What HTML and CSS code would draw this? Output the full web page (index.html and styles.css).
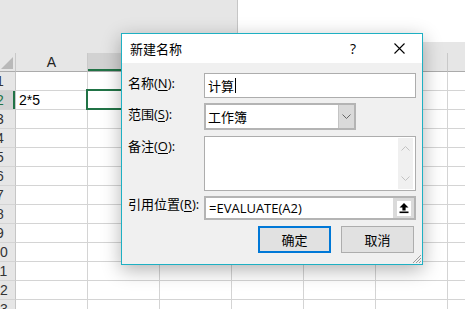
FILE: index.html
```html
<!DOCTYPE html>
<html lang="zh-CN">
<head>
  <meta charset="UTF-8" />
  <title>新建名称</title>
  <link rel="stylesheet" href="styles.css">
</head>
<body>
<div class="app">

  <!-- area above the grid -->
  <div class="topbar">
    <div class="namebox"></div>
    <div class="top-right"></div>
  </div>

  <!-- worksheet (headers B-G sit under the dialog) -->
  <div class="sheet">
    <div class="row head">
      <div class="rh corner"><span class="tri"></span></div>
      <div class="cell ch">A</div>
      <div class="cell ch sel"></div>
      <div class="cell ch"></div>
      <div class="cell ch"></div>
      <div class="cell ch"></div>
      <div class="cell ch"></div>
      <div class="cell ch"></div>
    </div>
    <div class="row"><div class="rh">1</div><div class="cell"></div><div class="cell"></div><div class="cell"></div><div class="cell"></div><div class="cell"></div><div class="cell"></div><div class="cell"></div></div>
    <div class="row"><div class="rh sel">2</div><div class="cell">2*5</div><div class="cell"></div><div class="cell"></div><div class="cell"></div><div class="cell"></div><div class="cell"></div><div class="cell"></div></div>
    <div class="row"><div class="rh">3</div><div class="cell"></div><div class="cell"></div><div class="cell"></div><div class="cell"></div><div class="cell"></div><div class="cell"></div><div class="cell"></div></div>
    <div class="row"><div class="rh">4</div><div class="cell"></div><div class="cell"></div><div class="cell"></div><div class="cell"></div><div class="cell"></div><div class="cell"></div><div class="cell"></div></div>
    <div class="row"><div class="rh">5</div><div class="cell"></div><div class="cell"></div><div class="cell"></div><div class="cell"></div><div class="cell"></div><div class="cell"></div><div class="cell"></div></div>
    <div class="row"><div class="rh">6</div><div class="cell"></div><div class="cell"></div><div class="cell"></div><div class="cell"></div><div class="cell"></div><div class="cell"></div><div class="cell"></div></div>
    <div class="row"><div class="rh">7</div><div class="cell"></div><div class="cell"></div><div class="cell"></div><div class="cell"></div><div class="cell"></div><div class="cell"></div><div class="cell"></div></div>
    <div class="row"><div class="rh">8</div><div class="cell"></div><div class="cell"></div><div class="cell"></div><div class="cell"></div><div class="cell"></div><div class="cell"></div><div class="cell"></div></div>
    <div class="row"><div class="rh">9</div><div class="cell"></div><div class="cell"></div><div class="cell"></div><div class="cell"></div><div class="cell"></div><div class="cell"></div><div class="cell"></div></div>
    <div class="row"><div class="rh">10</div><div class="cell"></div><div class="cell"></div><div class="cell"></div><div class="cell"></div><div class="cell"></div><div class="cell"></div><div class="cell"></div></div>
    <div class="row"><div class="rh">11</div><div class="cell"></div><div class="cell"></div><div class="cell"></div><div class="cell"></div><div class="cell"></div><div class="cell"></div><div class="cell"></div></div>
    <div class="row"><div class="rh">12</div><div class="cell"></div><div class="cell"></div><div class="cell"></div><div class="cell"></div><div class="cell"></div><div class="cell"></div><div class="cell"></div></div>
    <div class="row"><div class="rh">13</div><div class="cell"></div><div class="cell"></div><div class="cell"></div><div class="cell"></div><div class="cell"></div><div class="cell"></div><div class="cell"></div></div>
  </div>

  <!-- active cell B2 -->
  <div class="cell-cursor"></div>

  <!-- dialog -->
  <div class="dialog">
    <div class="dlg-title">
      <span class="dlg-caption">新建名称</span>
      <span class="dlg-btn">?</span>
      <span class="dlg-btn">
        <svg width="11" height="11" viewBox="0 0 11 11"><path d="M0.5 0.5 L10.5 10.5 M10.5 0.5 L0.5 10.5" stroke="#000" stroke-width="1.1" fill="none"/></svg>
      </span>
    </div>

    <div class="dlg-body">
      <div class="frow r-name">
        <div class="lbl">名称(<u>N</u>):</div>
        <div class="box name-box">计算<span class="caret"></span></div>
      </div>

      <div class="frow r-scope">
        <div class="lbl">范围(<u>S</u>):</div>
        <div class="box combo">
          <span class="combo-text">工作簿</span>
          <span class="combo-btn">
            <svg width="9" height="5" viewBox="0 0 9 5"><path d="M0.5 0.5 L4.5 4.5 L8.5 0.5" stroke="#666" fill="none"/></svg>
          </span>
        </div>
      </div>

      <div class="frow r-note">
        <div class="lbl">备注(<u>O</u>):</div>
        <div class="box note">
          <div class="vscroll">
            <svg width="9" height="5" viewBox="0 0 9 5"><path d="M0.5 4.5 L4.5 0.5 L8.5 4.5" stroke="#c2c2c2" fill="none"/></svg>
            <svg width="9" height="5" viewBox="0 0 9 5"><path d="M0.5 0.5 L4.5 4.5 L8.5 0.5" stroke="#c2c2c2" fill="none"/></svg>
          </div>
        </div>
      </div>

      <div class="frow r-ref">
        <div class="lbl">引用位置(<u>R</u>):</div>
        <div class="box refbox">
          <span class="ref-text">=EVALUATE(A2)</span>
          <span class="ref-btn">
            <span class="ref-icon">
              <svg width="14" height="14" viewBox="0 0 14 14"><path d="M7 2 L11.5 6.5 L8.6 6.5 L8.6 9.5 L5.4 9.5 L5.4 6.5 L2.5 6.5 Z" fill="#000"/><rect x="2.5" y="10.5" width="9" height="1.6" fill="#000"/></svg>
            </span>
          </span>
        </div>
      </div>

      <div class="btn-row">
        <button class="btn btn-ok">确定</button>
        <button class="btn">取消</button>
      </div>
    </div>

    <svg class="grip" width="10" height="10" viewBox="0 0 10 10">
      <path d="M9 1 L1 9 M9 4 L4 9 M9 7 L7 9" stroke="#9a9a9a" stroke-width="1" fill="none"/>
    </svg>
  </div>

</div>
</body>
</html>
```

FILE: styles.css
```css
* {
  box-sizing: border-box;
}

body {
  margin: 0;
  background: #fff;
  font-family: "Liberation Sans", Arial, sans-serif;
}

.app {
  position: relative;
  width: 465px;
  height: 309px;
  overflow: hidden;
}

/* top area */
.topbar {
  display: flex;
  height: 53px;
}

.namebox {
  width: 238px;
  background: #e6e6e6;
  border-right: 1px solid #c6c6c6;
}

.top-right {
  flex: 1;
  background: linear-gradient(#fff 0 42px, #e6e6e6 42px);
}

/* grid */
.row {
  display: flex;
  height: 19px;
}

.rh {
  flex: none;
  width: 31px;
  margin-left: -15px;
  display: flex;
  align-items: center;
  justify-content: center;
  background: #e6e6e6;
  border-right: 1px solid #c6c6c6;
  border-bottom: 1px solid #d4d4d4;
  font-size: 14px;
  color: #333;
}

.rh.sel {
  background: #d2d2d2;
  color: #217346;
  box-shadow: inset -2px 0 #217346;
}

.cell {
  flex: none;
  width: 72px;
  border-right: 1px solid #d4d4d4;
  border-bottom: 1px solid #d4d4d4;
  font-size: 14px;
  line-height: 18px;
  padding-left: 3px;
  color: #000;
}

.head .rh,
.head .cell {
  background: #e6e6e6;
  border-bottom-color: #ababab;
  border-right-color: #c9c9c9;
}

.ch {
  text-align: center;
  padding-left: 0;
  color: #222;
}

.head .cell.sel {
  background: #d2d2d2;
  box-shadow: inset 0 -2px #217346;
}

.corner {
  justify-content: flex-end;
  align-items: flex-end;
  padding: 0 2px 2px 0;
}

.tri {
  width: 0;
  height: 0;
  border-left: 12px solid transparent;
  border-bottom: 12px solid #b9b9b9;
}

.cell-cursor {
  position: absolute;
  left: 86px;
  top: 89px;
  width: 75px;
  height: 21px;
  border: 2px solid #217346;
}

/* dialog */
.dialog {
  position: absolute;
  left: 121px;
  top: 33px;
  width: 302px;
  height: 232px;
  border: 1px solid #1eb0c3;
  background: #f0f0f0;
  box-shadow: 0 5px 18px rgba(0, 0, 0, 0.3);
  font-family: "Open Sans", "Noto Sans CJK SC", sans-serif;
  font-size: 13px;
  color: #000;
}

.dlg-title {
  display: flex;
  align-items: center;
  height: 29px;
  background: #fff;
  padding-left: 8px;
}

.dlg-caption {
  flex: 1;
}

.dlg-btn {
  width: 46px;
  display: flex;
  justify-content: center;
  align-items: center;
  font-size: 14px;
}

.dlg-body {
  padding: 10px 6px 11px 6px;
}

.frow {
  display: flex;
  align-items: flex-start;
}

.lbl {
  width: 76px;
  line-height: 17px;
  padding-top: 2px;
  white-space: nowrap;
}

.lbl u {
  text-underline-offset: 2px;
}

.box {
  background: #fff;
  border: 1px solid #adadad;
}

.r-name .box {
  width: 212px;
  height: 25px;
}

.name-box {
  display: flex;
  align-items: center;
  padding-left: 3px;
}

.caret {
  display: inline-block;
  width: 1px;
  height: 15px;
  background: #000;
  margin-left: 1px;
}

.r-scope {
  margin-top: 5px;
}

.r-scope .lbl {
  padding-top: 3px;
}

.combo {
  display: flex;
  width: 152px;
  height: 27px;
  border: 2px solid #b4b4b4;
}

.combo-text {
  flex: 1;
  display: flex;
  align-items: center;
  padding-left: 2px;
}

.combo-btn {
  width: 16px;
  display: flex;
  align-items: center;
  justify-content: center;
  background: #dadada;
  border-left: 1px solid #c4c4c4;
}

.r-note {
  margin-top: 6px;
}

.note {
  display: flex;
  justify-content: flex-end;
  width: 212px;
  height: 55px;
  padding: 1px 2px 1px 0;
}

.vscroll {
  width: 15px;
  background: #f0f0f0;
  display: flex;
  flex-direction: column;
  justify-content: space-between;
  align-items: center;
  padding: 8px 0 8px;
}

.r-ref {
  margin-top: 5px;
}

.r-ref .lbl {
  padding-top: 0;
}

.refbox {
  display: flex;
  width: 212px;
  height: 24px;
  border: 2px solid #b4b4b4;
}

.ref-text {
  flex: 1;
  display: flex;
  align-items: center;
  padding-left: 3px;
}

.ref-btn {
  width: 21px;
  display: flex;
  align-items: center;
  justify-content: center;
  background: #dadada;
}

.ref-icon {
  width: 14px;
  height: 15px;
  background: #fff;
  display: flex;
  align-items: center;
  justify-content: center;
}

.btn-row {
  display: flex;
  justify-content: flex-end;
  gap: 10px;
  margin-top: 6px;
  padding-right: 2px;
}

.btn {
  width: 73px;
  height: 27px;
  background: #e1e1e1;
  border: 1px solid #adadad;
  font-family: "Open Sans", "Noto Sans CJK SC", sans-serif;
  font-size: 13px;
  color: #000;
  padding: 0;
}

.btn-ok {
  border: 2px solid #0078d7;
}

.grip {
  position: absolute;
  right: 0;
  bottom: 0;
}
```
